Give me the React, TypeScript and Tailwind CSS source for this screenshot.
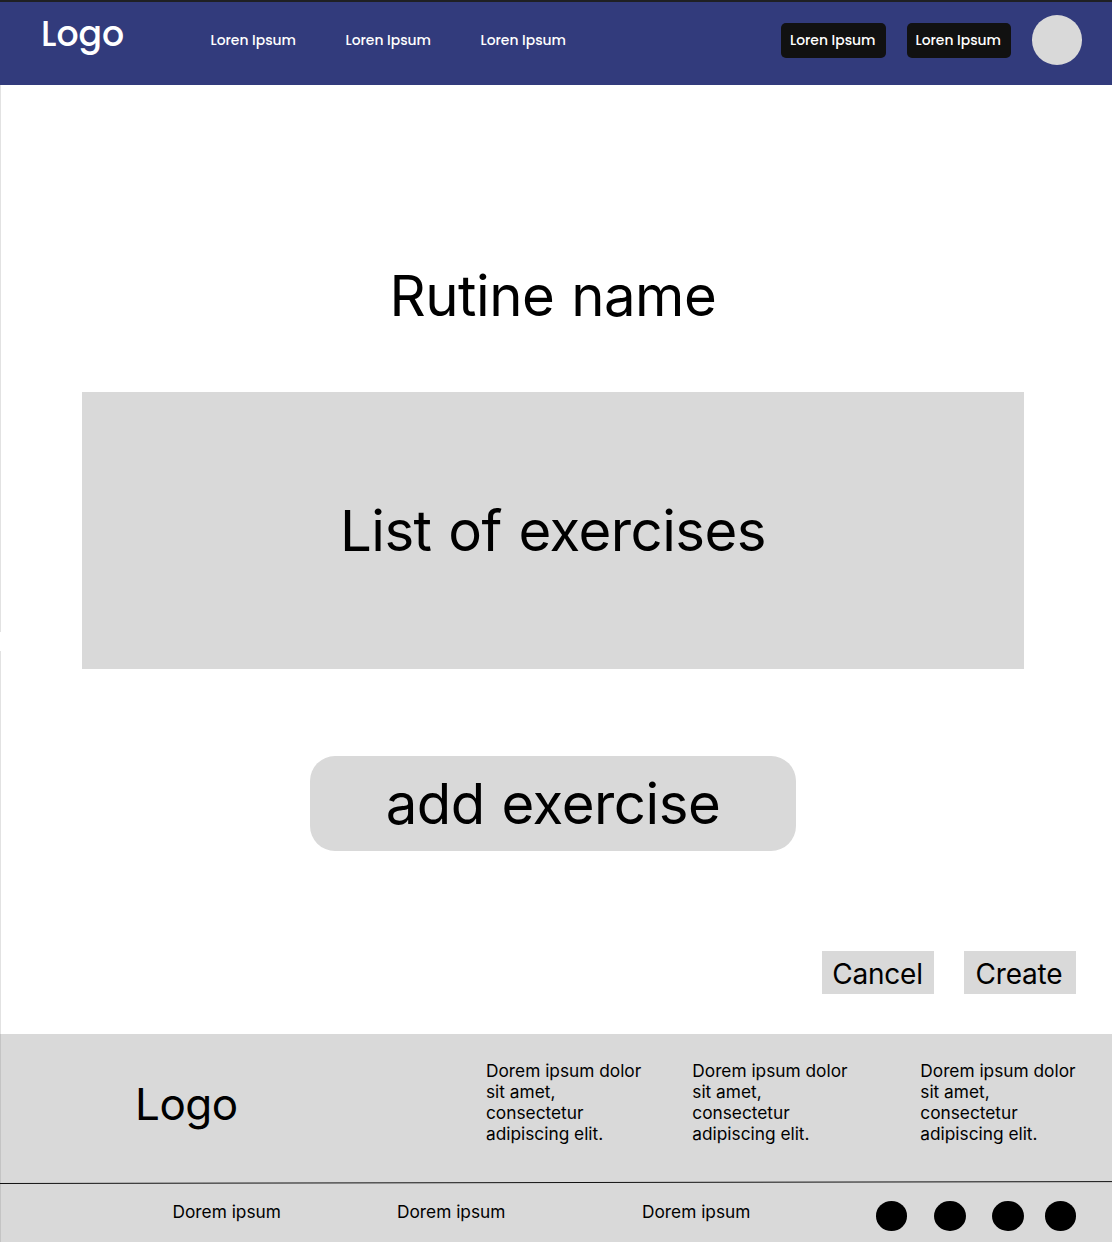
const Circle = ({ className = "" }: { className?: string }) => (
  <span className={`block h-[30px] w-[31.6px] shrink-0 rounded-[50%] bg-black ${className}`} />
);

const lorem = ["Dorem ipsum dolor", "sit amet,", "consectetur", "adipiscing elit."];

const Column = ({ className = "" }: { className?: string }) => (
  <p className={`shrink-0 whitespace-nowrap text-[17.3px] leading-[21px] ${className}`}>
    {lorem.map((line) => (
      <span key={line} className="block">{line}</span>
    ))}
  </p>
);

export default function App() {
  return (
    <div className="flex h-[1242px] w-[1112px] flex-col overflow-hidden bg-white font-['Inter',sans-serif] text-black">
      <header className="flex h-[85px] shrink-0 border-t-2 border-[#1f2023] bg-[#323b7c] font-['Poppins','Inter',sans-serif] font-medium text-white">
        <div className="ml-[41px] mt-[8px] w-[169.5px] text-[34.7px] leading-[48px]">Logo</div>
        <nav className="mt-[28px] flex text-[13.9px] leading-5">
          <a className="w-[135px]">Loren Ipsum</a>
          <a className="w-[135px]">Loren Ipsum</a>
          <a className="w-[135px]">Loren Ipsum</a>
        </nav>
        <div className="ml-[165.5px] mt-[20.5px] flex gap-[21px] whitespace-nowrap text-[13.9px]">
          <button className="h-[35px] w-[104.5px] rounded-[5px] bg-[#111] pr-px leading-[35px]">Loren Ipsum</button>
          <button className="h-[35px] w-[104.5px] rounded-[5px] bg-[#111] pr-px leading-[35px]">Loren Ipsum</button>
        </div>
        <div className="ml-[20.5px] mt-[13px] h-[49.5px] w-[50px] rounded-[50%] bg-[#d9d9d9]" />
      </header>
      <main className="flex h-[949px] shrink-0">
        <div className="flex w-px flex-col">
          <div className="h-[547px] bg-[#e2e2e2]" />
          <div className="mt-[19px] flex-1 bg-[#e2e2e2]" />
        </div>
        <div className="flex flex-1 flex-col">
          <h1 className="ml-[388.5px] mt-[176px] h-[70px] whitespace-nowrap text-[56.3px] leading-[70px] tracking-[-0.45px] [word-spacing:1.3px]">Rutine name</h1>
          <section className="ml-[81px] mt-[61px] flex h-[277px] w-[942px] items-center justify-center bg-[#d9d9d9] pt-[2px] text-[56.3px] tracking-[-0.5px] [word-spacing:1.3px]">List of exercises</section>
          <button className="ml-[309px] mt-[86.5px] h-[95.5px] w-[486px] rounded-[25px] bg-[#d9d9d9] text-[56.3px] leading-[95px] tracking-[-0.45px] [word-spacing:1.3px]">add exercise</button>
          <div className="ml-[821px] mt-[100px] flex gap-[30px] text-[28px] tracking-[-0.2px]">
            <button className="h-[43px] w-[112px] bg-[#d9d9d9] pr-px leading-[46px]">Cancel</button>
            <button className="h-[43px] w-[112px] bg-[#d9d9d9] pr-[2px] leading-[46px]">Create</button>
          </div>
        </div>
      </main>
      <footer className="h-[208px] shrink-0 border-l border-[#c4c4c4] bg-[#d9d9d9]">
        <div className="flex h-[147px]">
          <div className="ml-[134px] mt-[42px] w-[351px] text-[44px] leading-[56px] tracking-[-0.5px]">Logo</div>
          <Column className="mt-[26px] w-[206.3px]" />
          <Column className="mt-[26px] w-[228px]" />
          <Column className="mt-[26px]" />
        </div>
        <svg className="-ml-px block h-[3px] w-[1112px]" viewBox="0 0 1112 3">
          <line x1="0" y1="2.5" x2="1112" y2="0.6" stroke="#111" strokeWidth="1" />
        </svg>
        <div className="flex text-[17.3px] leading-[21px]">
          <span className="ml-[171.5px] mt-[17px] w-[224.5px]">Dorem ipsum</span>
          <span className="mt-[17px] w-[245px]">Dorem ipsum</span>
          <span className="mt-[17px] w-[233.8px]">Dorem ipsum</span>
          <div className="mt-[17px] flex">
            <Circle className="mr-[26.6px]" />
            <Circle className="mr-[26.6px]" />
            <Circle className="mr-[21px]" />
            <Circle />
          </div>
        </div>
      </footer>
    </div>
  );
}
